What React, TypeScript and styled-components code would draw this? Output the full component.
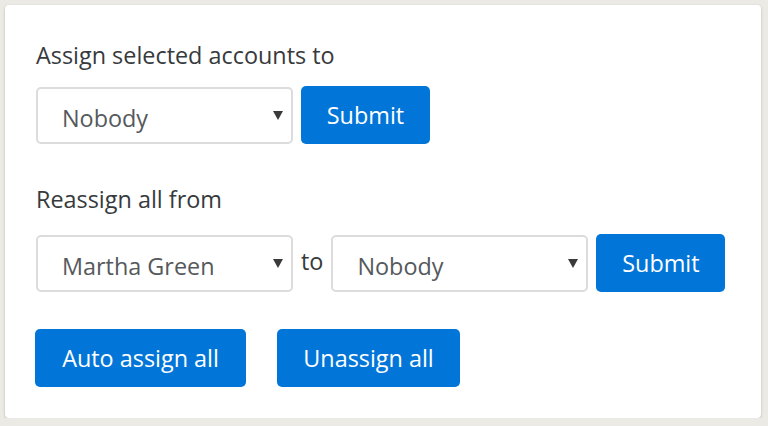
import styled, { createGlobalStyle } from "styled-components";

const GlobalStyle = createGlobalStyle`
    html, body {
        margin: 0;
        padding: 0;
        background: #ebeae4;
    }
    body {
        padding: 5px 0 0 5px;
        font-family: "Open Sans", "Noto Sans", sans-serif;
        color: #373a3c;
    }
`;

const Card = styled.div`
    width: 756px;
    height: 413px;
    box-sizing: border-box;
    background: #fff;
    border-radius: 4px;
    box-shadow: 0 1px 3px rgba(0, 0, 0, 0.2);
    padding: 34px 30px 0 31px;
`;

const Label = styled.div<{ $mb: number }>`
    font-size: 23.4px;
    line-height: 32px;
    margin-bottom: ${(p) => p.$mb}px;
`;

const Section = styled.div<{ $gap: number }>`
    margin-bottom: ${(p) => p.$gap}px;
`;

const Row = styled.div`
    display: flex;
    align-items: center;
    gap: 8px;
`;

const SelectWrap = styled.div`
    position: relative;
    width: 257px;
`;

const Select = styled.select`
    appearance: none;
    display: block;
    width: 100%;
    height: 57px;
    border: 2px solid #dcdcdc;
    border-radius: 5px;
    background: #fff;
    padding: 6px 0 0 24px;
    font-family: inherit;
    font-size: 23.4px;
    color: #55595c;
    outline: none;
`;

const Caret = styled.svg`
    position: absolute;
    right: 10px;
    top: 24px;
    pointer-events: none;
`;

const To = styled.span`
    font-size: 23.4px;
    margin-top: -5px;
`;

const Button = styled.button<{ $w: number }>`
    width: ${(p) => p.$w}px;
    height: 58px;
    border: none;
    border-radius: 5px;
    background: #0276d8;
    color: #fff;
    font-family: inherit;
    font-size: 23.4px;
    padding: 0;
    cursor: pointer;
`;

const Actions = styled.div`
    display: flex;
    gap: 31px;
    margin-left: -1px;
`;

function Dropdown({ value }: { value: string }) {
    return (
        <SelectWrap>
            <Select defaultValue={value}>
                <option>Nobody</option>
                <option>Martha Green</option>
            </Select>
            <Caret width="10" height="9" viewBox="0 0 10 9">
                <path d="M0 0 H10 L5 9 Z" fill="#3a3a3a" />
            </Caret>
        </SelectWrap>
    );
}

export default function App() {
    return (
        <>
            <GlobalStyle />
            <Card>
                <Section $gap={39}>
                    <Label $mb={15}>Assign selected accounts to</Label>
                    <Row>
                        <Dropdown value="Nobody" />
                        <Button $w={129}>Submit</Button>
                    </Row>
                </Section>
                <Section $gap={37}>
                    <Label $mb={19}>Reassign all from</Label>
                    <Row>
                        <Dropdown value="Martha Green" />
                        <To>to</To>
                        <Dropdown value="Nobody" />
                        <Button $w={129}>Submit</Button>
                    </Row>
                </Section>
                <Actions>
                    <Button $w={211}>Auto assign all</Button>
                    <Button $w={183}>Unassign all</Button>
                </Actions>
            </Card>
        </>
    );
}
